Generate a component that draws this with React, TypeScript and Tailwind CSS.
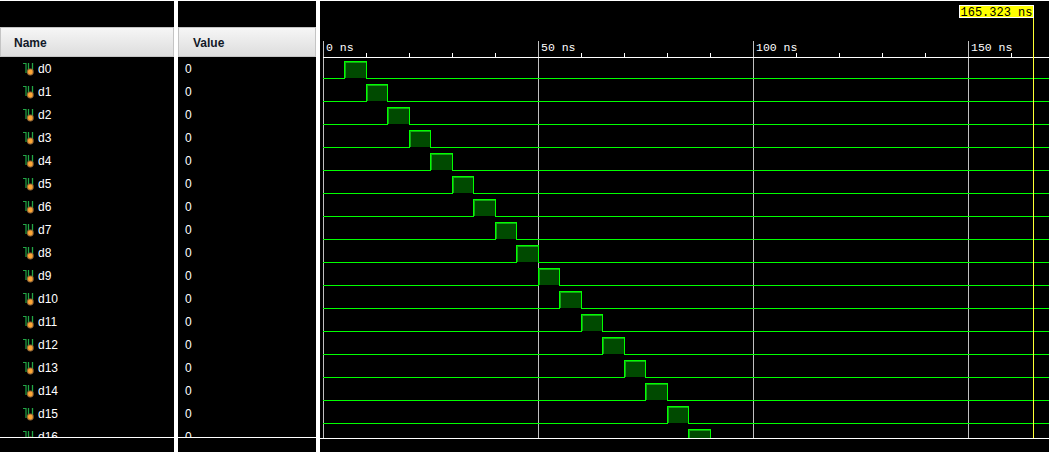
const SIGNALS = Array.from({ length: 17 }, (_, i) => `d${i}`);
const FONT = { fontFamily: '"Liberation Mono", monospace' };
const MAJOR = [323, 538, 753, 968];
const MINOR = [366, 409, 452, 495, 581, 624, 667, 710, 796, 839, 882, 925, 1011];
const LABELS = ["0 ns", "50 ns", "100 ns", "150 ns"];

function SignalIcon() {
  return (
    <svg width="14" height="14" viewBox="0 0 14 14" className="mr-[2px] shrink-0">
      <path d="M1 1.5H4V11" fill="none" stroke="#22a545" strokeWidth="1.2" />
      <path d="M6.5 1V9M10.5 1V9" fill="none" stroke="#22a545" strokeWidth="1.3" />
      <circle cx="8.3" cy="10" r="3.4" fill="#9a6c38" />
      <circle cx="8.3" cy="10" r="2.4" fill="#fba534" />
    </svg>
  );
}

function Header({ label, pad }: { label: string; pad: string }) {
  return (
    <div
      className={`flex h-[30px] items-center border border-[#c4c4c4] bg-gradient-to-b from-[#f6f6f6] to-[#dddddd] pt-[2px] text-[12px] font-bold text-[#111827] ${pad}`}
    >
      {label}
    </div>
  );
}

function Column({ width, children }: { width: string; children: React.ReactNode }) {
  return <div className={`flex flex-col ${width}`}>{children}</div>;
}

function Waves() {
  return (
    <svg width="729" height="437" viewBox="320 1 729 437" shapeRendering="crispEdges" className="block">
      {MAJOR.map((x) => (
        <line key={x} x1={x + 0.5} x2={x + 0.5} y1="41" y2="438" stroke="#c0c0c0" />
      ))}
      <line x1="323" x2="1049" y1="57.5" y2="57.5" stroke="#ffffff" />
      {MINOR.map((x) => (
        <line key={x} x1={x + 0.5} x2={x + 0.5} y1="53" y2="57" stroke="#ffffff" />
      ))}
      {LABELS.map((label, i) => (
        <text
          key={label}
          x={MAJOR[i] + 3}
          y="51"
          fill="#ffffff"
          fontSize="11.5"
          style={FONT}
          shapeRendering="auto"
        >
          {label}
        </text>
      ))}
      {SIGNALS.map((name, i) => {
        const base = 78 + 23 * i;
        const top = 61 + 23 * i;
        const x1 = Math.floor(323 + 21.5 * (i + 1));
        const x2 = Math.floor(323 + 21.5 * (i + 2));
        return (
          <g key={name}>
            <rect x={x1} y={top} width={x2 - x1} height={base - top} fill="#004a00" />
            <rect x={x1 + 1} y={top + 1} width={x2 - x1 - 1} height={1} fill="#12a812" />
            <rect x={x1 + 1} y={top + 1} width={1} height={base - top - 1} fill="#12a812" />
            <path
              d={`M323 ${base + 0.5}H${x1 + 0.5}V${top + 0.5}H${x2 + 0.5}V${base + 0.5}H1049`}
              fill="none"
              stroke="#00ff00"
              strokeWidth="1"
            />
          </g>
        );
      })}
      <line x1="1033.5" x2="1033.5" y1="18" y2="438" stroke="#ffff33" />
      <rect x="959.5" y="5.5" width="74" height="12" fill="#ffff00" stroke="#ffffff" />
      <text x="960.5" y="15.5" fill="#000000" fontSize="12" style={FONT} shapeRendering="auto">
        165.323 ns
      </text>
    </svg>
  );
}

export default function App() {
  return (
    <div
      className="flex h-[452px] w-[1049px] flex-col overflow-hidden bg-black text-[12px] text-white"
      style={{ fontFamily: '"Liberation Sans", Arial, sans-serif' }}
    >
      <div className="h-px shrink-0 bg-white" />
      <div className="flex flex-1 gap-[4px] bg-white">
        <Column width="w-[174px] bg-black">
          <div className="h-[26px]" />
          <Header label="Name" pad="pl-[13px]" />
          <div className="h-[381px] overflow-hidden border-b border-white">
            {SIGNALS.map((name) => (
              <div key={name} className="flex h-[23px] items-center pl-[22px]">
                <SignalIcon />
                <span>{name}</span>
              </div>
            ))}
          </div>
        </Column>
        <Column width="w-[138px] bg-black">
          <div className="h-[26px]" />
          <Header label="Value" pad="pl-[14px]" />
          <div className="h-[381px] overflow-hidden border-b border-white">
            {SIGNALS.map((name) => (
              <div key={name} className="flex h-[23px] items-center pl-[7px]">
                0
              </div>
            ))}
          </div>
        </Column>
        <Column width="flex-1 bg-black">
          <div className="border-b border-white">
            <Waves />
          </div>
        </Column>
      </div>
    </div>
  );
}
